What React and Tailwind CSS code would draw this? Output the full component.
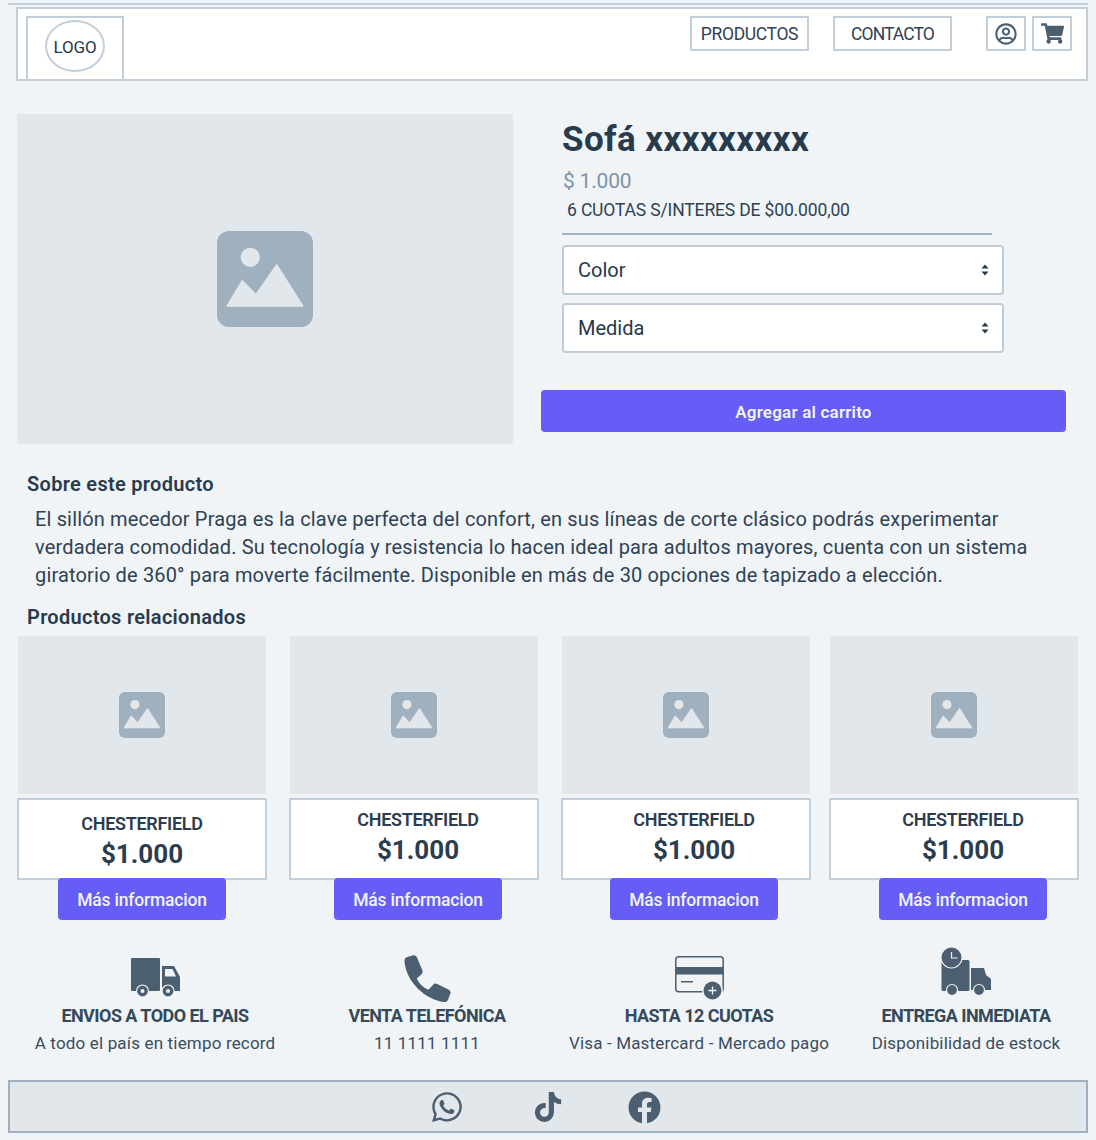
import React from "react";
import { FaWhatsapp, FaTiktok, FaFacebook, FaShoppingCart, FaRegUserCircle } from "react-icons/fa";

const DARK = "#4b5f70";
const BG = "#f0f4f7";

function ImageIcon({ size }) {
  return (
    <svg width={size} height={size} viewBox="0 0 96 96">
      <rect width="96" height="96" rx="12" fill="#9fb0bf" />
      <circle cx="33.3" cy="26.3" r="9.6" fill="#e2e7eb" />
      <path d="M10.3 75 25.3 49.7 39 63.7 59.7 34 85.7 75Z" fill="#e2e7eb" stroke="#e2e7eb" strokeWidth="1.5" strokeLinejoin="round" />
    </svg>
  );
}

function Truck() {
  return (
    <svg width="49" height="39" viewBox="0 0 49 39" className="mt-[11px]">
      <rect x="0" y="0" width="29" height="33" rx="1" fill={DARK} />
      <path d="M31 8H43L49 19V33H31Z" fill={DARK} />
      <path d="M34 11H41.5L45 18.5H34Z" fill={BG} />
      <circle cx="11.5" cy="33" r="6" fill={DARK} stroke={BG} strokeWidth="1.2" />
      <circle cx="11.5" cy="33" r="2" fill={BG} />
      <circle cx="37" cy="33" r="6" fill={DARK} stroke={BG} strokeWidth="1.2" />
      <circle cx="37" cy="33" r="2" fill={BG} />
    </svg>
  );
}

function CardIcon() {
  return (
    <svg width="49" height="44" viewBox="0 0 49 44" className="mt-[9px]">
      <rect x="0.8" y="0.8" width="47.4" height="35" rx="3" fill="none" stroke={DARK} strokeWidth="1.5" />
      <rect x="0.8" y="11" width="47.4" height="7.5" fill={DARK} />
      <rect x="6" y="25" width="12" height="1.5" fill={DARK} />
      <circle cx="37.5" cy="34.5" r="10.5" fill={BG} />
      <circle cx="37.5" cy="34.5" r="9" fill={DARK} />
      <path d="M37.5 30.5v8M33.5 34.5h8" stroke={BG} strokeWidth="1.3" />
    </svg>
  );
}

function DeliveryIcon() {
  return (
    <svg width="50" height="48" viewBox="0 0 50 48">
      <rect x="0.5" y="13" width="28" height="31" rx="1.5" fill={DARK} />
      <path d="M30 21H43L45 28L50 32V43H30Z" fill={DARK} />
      <circle cx="10.5" cy="10.5" r="11" fill={BG} />
      <circle cx="10.5" cy="10.5" r="10" fill={DARK} />
      <path d="M10.5 5v6h6" fill="none" stroke={BG} strokeWidth="1.2" />
      <circle cx="11" cy="43" r="5.5" fill={DARK} stroke={BG} strokeWidth="1.2" />
      <circle cx="38" cy="43" r="5.5" fill={DARK} stroke={BG} strokeWidth="1.2" />
    </svg>
  );
}

function PhoneIcon() {
  return (
    <svg width="47" height="47" viewBox="0 0 46 46" className="mt-[8px]">
      <path
        d="M.5 6Q0 3 3 2L9 .3Q11.5-.2 12.5 2L18 15Q18.8 17.5 17 19L12.5 23Q16 31 24 34L28.5 29Q30 27.2 32.5 28.3L44 34Q46 35.2 45.5 37.5L43 44Q42 46.5 39 46C20 43 2 26 .5 6Z"
        fill={DARK}
      />
    </svg>
  );
}

function Sort() {
  return (
    <svg width="8" height="12" viewBox="0 0 8 12">
      <path d="M4 0.5 7.5 4.5H.5ZM4 11.5 .5 7.5H7.5Z" fill="#243b4f" />
    </svg>
  );
}

function SelectBox({ label, className }) {
  return (
    <div className={`flex h-[50px] w-[442px] items-center justify-between rounded-[4px] border-2 border-[#c0ccd8] bg-white pl-[14px] pr-[13px] text-[20px] text-[#26384a] ${className}`}>
      <span>{label}</span>
      <Sort />
    </div>
  );
}

function Related({ x, contentPad, textTop }) {
  return (
    <div className={`flex w-[250px] flex-col ${x}`}>
      <div className="mx-px flex h-[158px] items-center justify-center bg-[#e2e7eb]">
        <ImageIcon size={46} />
      </div>
      <div className={`mt-[4px] flex h-[82px] flex-col items-center border-2 border-[#c2cfdb] bg-white ${contentPad} ${textTop}`}>
        <div className="text-[18px] font-semibold leading-[24px] tracking-[-0.3px] text-[#2b3d4e]">CHESTERFIELD</div>
        <div className="mt-[3px] text-[26px] font-bold leading-[30px] text-[#2b3d4e]">$1.000</div>
      </div>
      <div className={`relative -mt-[2px] flex justify-center ${contentPad}`}>
        <div className="flex h-[42px] w-[168px] items-center justify-center rounded-[4px] bg-[#665cf6] pt-[2px] text-[17.5px] font-medium tracking-[-0.2px] text-[#f0f4f8]">
          Más informacion
        </div>
      </div>
    </div>
  );
}

function Feature({ icon, title, sub, className }) {
  return (
    <div className={`flex shrink-0 flex-col items-center ${className}`}>
      <div className="flex h-[57px] flex-col items-center">{icon}</div>
      <div className="text-[18px] font-bold leading-[24px] tracking-[-0.55px] text-[#34495a]">{title}</div>
      <div className="mt-[3px] text-[17px] leading-[24px] tracking-[0.17px] text-[#3a4d5e]">{sub}</div>
    </div>
  );
}

export default function App() {
  return (
    <div className="min-h-[1140px] overflow-hidden bg-[#f0f4f7] pt-[3px] text-[#26384a]" style={{ fontFamily: "Roboto, sans-serif" }}>
      <div className="ml-2 h-[2px] w-[1080px] bg-[#c2cfdb]" />
      <header className="ml-4 mt-[2px] flex h-[74px] w-[1072px] justify-between border-2 border-[#c2cfdb] bg-white">
        <div className="ml-2 mt-[7px] flex h-[65px] w-[98px] border-2 border-[#c2cfdb] pl-[17px] pt-[2px]">
          <div className="flex h-[52px] w-[60px] items-center justify-center rounded-[50%] border-2 border-[#c2cfdb] pt-[4px] text-[17px] tracking-[-0.1px] text-[#26384a]">
            LOGO
          </div>
        </div>
        <nav className="mr-[14px] mt-[7px] flex items-start text-[17.5px] text-[#2f4253]">
          <div className="flex h-[35px] w-[119px] items-center justify-center border-2 border-[#c2cfdb] pt-[1px] tracking-[-0.35px]">PRODUCTOS</div>
          <div className="ml-[24px] flex h-[35px] w-[119px] items-center justify-center border-2 border-[#c2cfdb] pt-[1px] tracking-[-0.9px]">CONTACTO</div>
          <div className="ml-[34px] flex h-[35px] w-[40px] items-center justify-center border-2 border-[#c2cfdb]">
            <FaRegUserCircle size={22} color={DARK} />
          </div>
          <div className="ml-[6px] flex h-[35px] w-[40px] items-center justify-center border-2 border-[#c2cfdb]">
            <FaShoppingCart size={23} color={DARK} />
          </div>
        </nav>
      </header>

      <section className="ml-[17px] mt-[33px] flex">
        <div className="flex h-[330px] w-[496px] items-center justify-center bg-[#e2e7eb]">
          <ImageIcon size={96} />
        </div>
        <div className="ml-[28px] flex w-[525px] flex-col">
          <div className="ml-[21px]">
            <h1 className="mt-[5px] text-[35px] font-bold leading-[42px] tracking-[0.4px] text-[#283b4c]">Sofá xxxxxxxxx</h1>
            <div className="ml-[1px] mt-[6px] text-[21px] leading-[28px] tracking-[-0.2px] text-[#7f93a5]">$ 1.000</div>
            <div className="ml-[5px] mt-[3px] text-[17.5px] leading-[24px] tracking-[-0.15px] text-[#2f4253]">6 CUOTAS S/INTERES DE $00.000,00</div>
            <div className="mt-[11px] h-[2px] w-[430px] bg-[#a3b2c1]" />
            <SelectBox label="Color" className="mt-[10px]" />
            <SelectBox label="Medida" className="mt-[8px]" />
          </div>
          <div className="mt-[37px] flex h-[42px] items-center justify-center rounded-[4px] bg-[#665cf6] pt-[3px] text-[17px] font-semibold tracking-[0.2px] text-[#f0f4f8]">
            Agregar al carrito
          </div>
        </div>
      </section>

      <h2 className="ml-[27px] mt-[27px] text-[20px] font-semibold leading-[26px] tracking-[0.3px] text-[#283b4c]">Sobre este producto</h2>
      <p className="ml-[35px] mt-[8px] w-[1010px] text-[20px] leading-[28px] tracking-[0.15px] text-[#2f4253]">
        El sillón mecedor Praga es la clave perfecta del confort, en sus líneas de corte clásico podrás experimentar verdadera comodidad. Su tecnología y resistencia lo hacen ideal para adultos mayores, cuenta con un sistema giratorio de 360° para moverte fácilmente. Disponible en más de 30 opciones de tapizado a elección.
      </p>
      <h2 className="ml-[27px] mt-[15px] text-[20px] font-semibold leading-[26px] tracking-[0.3px] text-[#283b4c]">Productos relacionados</h2>

      <section className="ml-[17px] mt-[6px] flex">
        <Related contentPad="" textTop="pt-[12px]" />
        <Related x="ml-[22px]" contentPad="pl-2" textTop="pt-[8px]" />
        <Related x="ml-[22px]" contentPad="pl-4" textTop="pt-[8px]" />
        <Related x="ml-[18px]" contentPad="pl-[18px]" textTop="pt-[8px]" />
      </section>

      <section className="ml-[19px] mt-[27px] flex">
        <Feature className="w-[272px]" icon={<Truck />} title="ENVIOS A TODO EL PAIS" sub="A todo el país en tiempo record" />
        <Feature className="w-[272px]" icon={<PhoneIcon />} title="VENTA TELEFÓNICA" sub="11 1111 1111" />
        <Feature className="w-[272px]" icon={<CardIcon />} title="HASTA 12 CUOTAS" sub="Visa - Mastercard - Mercado pago" />
        <Feature className="w-[262px]" icon={<DeliveryIcon />} title="ENTREGA INMEDIATA" sub="Disponibilidad de estock" />
      </section>

      <footer className="ml-2 mt-[25px] flex h-[53px] w-[1080px] items-center border-2 border-[#9fb0c0] bg-[#e2e7eb]">
        <FaWhatsapp size={34} color={DARK} className="ml-[420px]" />
        <FaTiktok size={30} color={DARK} className="ml-[69px]" />
        <FaFacebook size={33} color={DARK} className="ml-[65px] mt-[1px]" />
      </footer>
    </div>
  );
}
